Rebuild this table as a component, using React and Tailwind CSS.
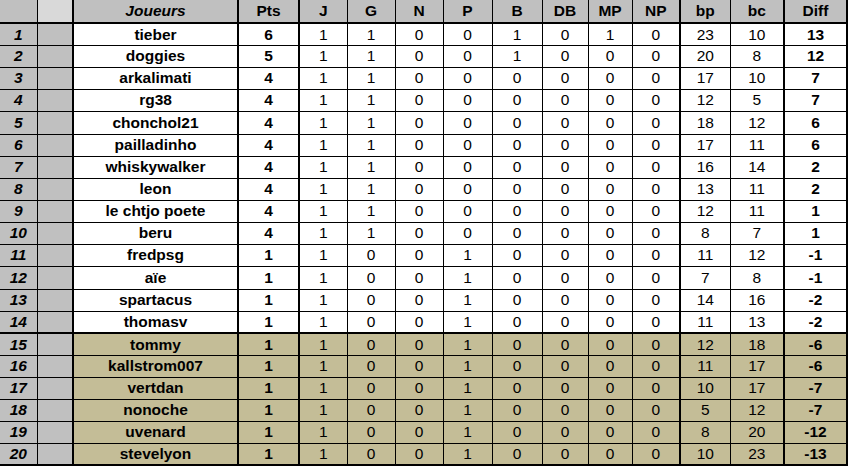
const rows = [
  [1, 'tieber', 6, 1, 1, 0, 0, 1, 0, 1, 0, 23, 10, 13],
  [2, 'doggies', 5, 1, 1, 0, 0, 1, 0, 0, 0, 20, 8, 12],
  [3, 'arkalimati', 4, 1, 1, 0, 0, 0, 0, 0, 0, 17, 10, 7],
  [4, 'rg38', 4, 1, 1, 0, 0, 0, 0, 0, 0, 12, 5, 7],
  [5, 'chonchol21', 4, 1, 1, 0, 0, 0, 0, 0, 0, 18, 12, 6],
  [6, 'pailladinho', 4, 1, 1, 0, 0, 0, 0, 0, 0, 17, 11, 6],
  [7, 'whiskywalker', 4, 1, 1, 0, 0, 0, 0, 0, 0, 16, 14, 2],
  [8, 'leon', 4, 1, 1, 0, 0, 0, 0, 0, 0, 13, 11, 2],
  [9, 'le chtjo poete', 4, 1, 1, 0, 0, 0, 0, 0, 0, 12, 11, 1],
  [10, 'beru', 4, 1, 1, 0, 0, 0, 0, 0, 0, 8, 7, 1],
  [11, 'fredpsg', 1, 1, 0, 0, 1, 0, 0, 0, 0, 11, 12, -1],
  [12, 'aïe', 1, 1, 0, 0, 1, 0, 0, 0, 0, 7, 8, -1],
  [13, 'spartacus', 1, 1, 0, 0, 1, 0, 0, 0, 0, 14, 16, -2],
  [14, 'thomasv', 1, 1, 0, 0, 1, 0, 0, 0, 0, 11, 13, -2],
  [15, 'tommy', 1, 1, 0, 0, 1, 0, 0, 0, 0, 12, 18, -6],
  [16, 'kallstrom007', 1, 1, 0, 0, 1, 0, 0, 0, 0, 11, 17, -6],
  [17, 'vertdan', 1, 1, 0, 0, 1, 0, 0, 0, 0, 10, 17, -7],
  [18, 'nonoche', 1, 1, 0, 0, 1, 0, 0, 0, 0, 5, 12, -7],
  [19, 'uvenard', 1, 1, 0, 0, 1, 0, 0, 0, 0, 8, 20, -12],
  [20, 'stevelyon', 1, 1, 0, 0, 1, 0, 0, 0, 0, 10, 23, -13],
]

const headers = ['J', 'G', 'N', 'P', 'B', 'DB', 'MP', 'NP', 'bp', 'bc']
const widths = [37, 36, 165, 61, 48, 48, 48, 49, 50, 46, 44, 48, 50, 54, 63]

// bordures épaisses comme dans le classeur
function thick(i) {
  return i === 1 || i === 2 || i === 3 || i === 11 || i === 13 || i === 14
}

export default function App() {
  return (
    <div className="bg-white w-[849px] h-[468px] overflow-hidden" style={{ fontFamily: '"Liberation Sans", Arial, sans-serif' }}>
      <table className="border-collapse table-fixed text-[15.5px] leading-none text-black">
        <colgroup>
          {widths.map((w, i) => (
            <col key={i} style={{ width: w }} />
          ))}
        </colgroup>
        <thead>
          <tr className="h-[23px] bg-[#c0c0c0] font-bold">
            <th className="border-r border-b-2 border-black"></th>
            <th className="border-r-2 border-b-2 border-black bg-[#d9d9d9]"></th>
            <th className="border-r-2 border-black italic text-center border-b-2">Joueurs</th>
            <th className="border-r-2 border-black border-b-2">Pts</th>
            {headers.map((h, i) => (
              <th key={h} className={`border-b-2 border-black ${thick(i + 4) ? 'border-r-2' : 'border-r'}`}>
                {h}
              </th>
            ))}
            <th className="border-r-2 border-b-2 border-black">Diff</th>
          </tr>
        </thead>
        <tbody>
          {rows.map((r, idx) => {
            const low = r[0] >= 15
            const bg = low ? 'bg-[#c4bd97]' : 'bg-white'
            const sep = r[0] === 14 ? 'border-b-2' : 'border-b'
            const last = r[0] === 20 ? 'border-b-2' : sep
            const h = idx === 4 || idx === 11 ? 'h-[23px]' : 'h-[22px]'
            return (
              <tr key={idx} className={h}>
                <td className={`bg-[#c0c0c0] border-r ${last} border-black text-center font-bold italic`}>{r[0]}</td>
                <td className={`bg-[#c0c0c0] border-r-2 ${last} border-black`}></td>
                <td className={`${bg} border-r-2 ${last} border-black text-center font-bold`}>{r[1]}</td>
                <td className={`${bg} border-r-2 ${last} border-black text-center font-bold`}>{r[2]}</td>
                {r.slice(3, 13).map((v, j) => (
                  <td key={j} className={`${bg} ${thick(j + 4) ? 'border-r-2' : 'border-r'} ${last} border-black text-center`}>
                    {v}
                  </td>
                ))}
                <td className={`${bg} border-r-2 ${last} border-black text-center font-bold`}>{r[13]}</td>
              </tr>
            )
          })}
        </tbody>
      </table>
    </div>
  )
}
